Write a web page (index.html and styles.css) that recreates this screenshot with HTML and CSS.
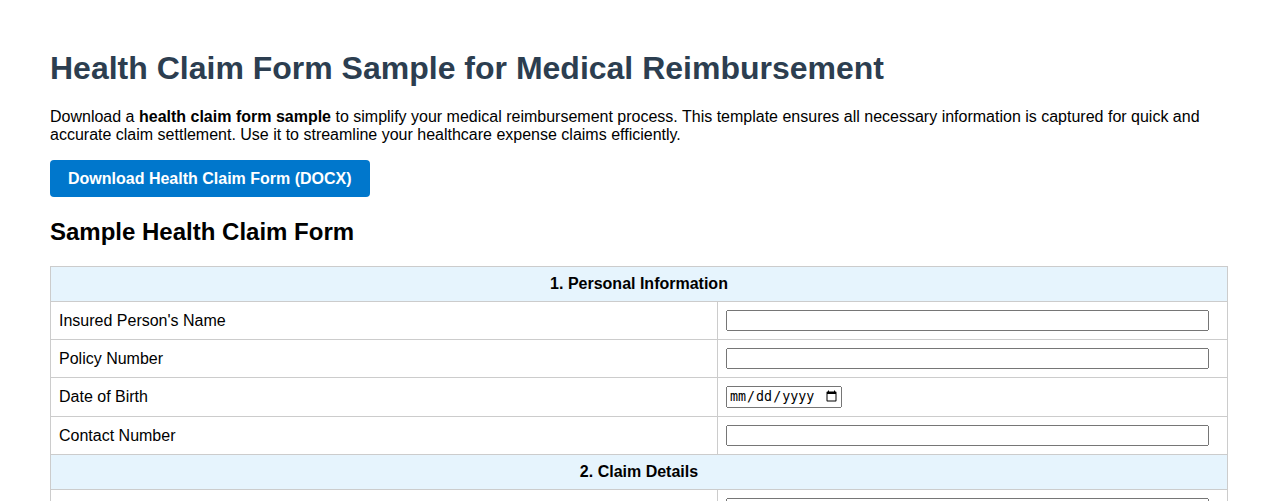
FILE: index.html
```html
<!DOCTYPE html>
<html>
<head>
  <link rel="stylesheet" href="styles.css">
</head>
<body>
  <div class="page">
    <h1 class="title">Health Claim Form Sample for Medical Reimbursement</h1>
    <p class="intro">Download a <strong>health claim form sample</strong> to simplify your medical reimbursement process. This template ensures all necessary information is captured for quick and accurate claim settlement. Use it to streamline your healthcare expense claims efficiently.</p>
    <a class="download-btn" href="#">Download Health Claim Form (DOCX)</a>

    <h2 class="form-title">Sample Health Claim Form</h2>
    <table class="claim-table">
      <colgroup>
        <col class="col-label">
        <col class="col-field">
      </colgroup>
      <tr class="section-row"><th colspan="2">1. Personal Information</th></tr>
      <tr><td>Insured Person's Name</td><td><input type="text"></td></tr>
      <tr><td>Policy Number</td><td><input type="text"></td></tr>
      <tr><td>Date of Birth</td><td><input type="date" class="date"></td></tr>
      <tr><td>Contact Number</td><td><input type="text"></td></tr>
      <tr class="section-row"><th colspan="2">2. Claim Details</th></tr>
      <tr><td>Hospital / Clinic Name</td><td><input type="text"></td></tr>
      <tr><td>Date of Admission</td><td><input type="date" class="date"></td></tr>
      <tr><td>Date of Discharge</td><td><input type="date" class="date"></td></tr>
      <tr><td>Total Claim Amount</td><td><input type="text"></td></tr>
    </table>
  </div>
</body>
</html>
```

FILE: styles.css
```css
/* Base Layout */
body {
  margin: 0;
  font-family: "Liberation Sans", Arial, sans-serif;
  color: #000;
  background: #fff;
}

.page {
  padding: 29px 50px 40px;
}

.title {
  margin: 21px 0 21px;
  font-size: 32px;
  font-weight: bold;
  color: #2c3e50;
}

.intro {
  margin: 0 0 16px;
  font-size: 16px;
  line-height: 18px;
}

.download-btn {
  display: inline-block;
  padding: 10px 18px 9px;
  background: #0077cc;
  color: #fff;
  font-size: 16px;
  font-weight: bold;
  line-height: 18px;
  text-decoration: none;
  border-radius: 4px;
}

.form-title {
  margin: 21px 0 20px;
  font-size: 24px;
  font-weight: bold;
  line-height: 28px;
}

/* Table */
.claim-table {
  width: 100%;
  border-collapse: collapse;
  table-layout: fixed;
  font-size: 16px;
}

.col-label {
  width: 667px;
}

.claim-table th,
.claim-table td {
  border: 1px solid #ccc;
  padding: 8px;
  line-height: 18px;
  text-align: left;
}

.section-row th {
  background: #e6f4fd;
  text-align: center;
  font-weight: bold;
}

.claim-table input {
  width: 483px;
  height: 21px;
  box-sizing: border-box;
  vertical-align: middle;
}

.claim-table input.date {
  width: 116px;
  height: 22px;
}
```
